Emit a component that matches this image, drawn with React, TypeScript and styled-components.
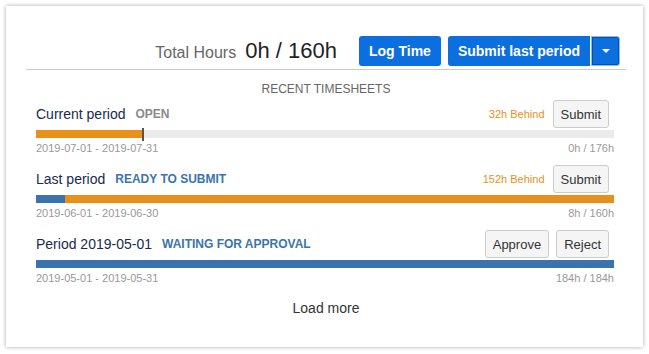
import React from 'react';
import styled, {createGlobalStyle} from 'styled-components';

type Period = {
    title: string;
    status: string;
    tone: 'grey' | 'blue';
    behind?: string;
    actions: string[];
    logged: number;
    expected: number;
    marker?: number;
    range: string;
    total: string;
};

const periods: Period[] = [
    {
        title: 'Current period', status: 'OPEN', tone: 'grey', behind: '32h Behind', actions: ['Submit'],
        logged: 0, expected: 18.3, marker: 18.3, range: '2019-07-01 - 2019-07-31', total: '0h / 176h'
    },
    {
        title: 'Last period', status: 'READY TO SUBMIT', tone: 'blue', behind: '152h Behind', actions: ['Submit'],
        logged: 5, expected: 100, range: '2019-06-01 - 2019-06-30', total: '8h / 160h'
    },
    {
        title: 'Period 2019-05-01', status: 'WAITING FOR APPROVAL', tone: 'blue', actions: ['Approve', 'Reject'],
        logged: 100, expected: 100, range: '2019-05-01 - 2019-05-31', total: '184h / 184h'
    },
];

const App: React.FC = () => {
    return (
        <>
            <GlobalStyle/>
            <Card>
                <Header>
                    <TotalLabel>Total Hours</TotalLabel>
                    <TotalValue>0h / 160h</TotalValue>
                    <PrimaryButton>Log Time</PrimaryButton>
                    <SplitGroup>
                        <PrimaryButton $split>Submit last period</PrimaryButton>
                        <DropdownButton aria-label="more">
                            <Caret/>
                        </DropdownButton>
                    </SplitGroup>
                </Header>
                <SectionTitle>Recent timesheets</SectionTitle>
                <List>
                    {periods.map(p => (
                        <Row key={p.title}>
                            <RowTop>
                                <Title>{p.title}</Title>
                                <Status $tone={p.tone}>{p.status}</Status>
                                <Spacer/>
                                {p.behind && <Behind>{p.behind}</Behind>}
                                <Actions>
                                    {p.actions.map(a => <LightButton key={a}>{a}</LightButton>)}
                                </Actions>
                            </RowTop>
                            <Bar>
                                <ExpectedFill style={{width: `${p.expected}%`}}/>
                                <LoggedFill style={{width: `${p.logged}%`}}/>
                                {p.marker !== undefined && <Marker style={{left: `${p.marker}%`}}/>}
                            </Bar>
                            <Meta>
                                <span>{p.range}</span>
                                <span>{p.total}</span>
                            </Meta>
                        </Row>
                    ))}
                </List>
                <LoadMore>Load more</LoadMore>
            </Card>
        </>
    )
};

export default App

const GlobalStyle = createGlobalStyle`
  body {
    margin: 0;
    padding: 6px;
    background: #fff;
    font-family: "Liberation Sans", Arial, sans-serif;
  }
`;

const Card = styled.div`
  width: 637px;
  height: 341px;
  box-sizing: border-box;
  background: #fff;
  box-shadow: 0 0 4px rgba(0, 0, 0, .35);
  padding: 30px 17px 0 20px;
`;

const Header = styled.div`
  display: flex;
  justify-content: flex-end;
  align-items: center;
  padding: 0 6px 3px 0;
  border-bottom: 1px solid #ccc;
`;

const TotalLabel = styled.span`
  font-size: 16px;
  color: #666;
  margin-right: 9px;
  padding-top: 3px;
`;

const TotalValue = styled.span`
  font-size: 22px;
  color: #222;
  margin-right: 22px;
`;

const PrimaryButton = styled.button<{ $split?: boolean }>`
  height: 30px;
  border: none;
  border-radius: ${p => p.$split ? '3px 0 0 3px' : '3px'};
  background: #0b6fe0;
  color: #fff;
  font-family: inherit;
  font-size: 14px;
  font-weight: bold;
  padding: 0 10px;
  margin-right: ${p => p.$split ? '0' : '7px'};
`;

const SplitGroup = styled.div`
  display: flex;
`;

const DropdownButton = styled.button`
  width: 29px;
  height: 30px;
  margin-left: 1px;
  border: 1px solid #8bb8ef;
  border-radius: 0 3px 3px 0;
  background: #0b6fe0;
  box-shadow: inset 0 0 0 1px #0b4fa8;
  display: flex;
  align-items: center;
  justify-content: center;
  padding: 0;
`;

const Caret = styled.span`
  width: 0;
  height: 0;
  border-left: 4px solid transparent;
  border-right: 4px solid transparent;
  border-top: 4px solid #fff;
`;

const SectionTitle = styled.div`
  text-align: center;
  text-transform: uppercase;
  font-size: 12px;
  color: #666;
  margin-top: 12px;
`;

const List = styled.div`
  display: flex;
  flex-direction: column;
  gap: 11px;
  padding: 0 12px 0 10px;
  margin-top: 4px;
`;

const Row = styled.div`
  display: flex;
  flex-direction: column;
`;

const RowTop = styled.div`
  display: flex;
  align-items: center;
  height: 28px;
  padding-right: 5px;
`;

const Title = styled.span`
  font-size: 14px;
  color: #172b4d;
  margin-right: 10px;
`;

const Status = styled.span<{ $tone: 'grey' | 'blue' }>`
  font-size: 12px;
  font-weight: bold;
  color: ${p => p.$tone === 'blue' ? '#3b73af' : '#8a8a8a'};
`;

const Spacer = styled.span`
  flex: 1;
`;

const Behind = styled.span`
  font-size: 11px;
  color: #e8901a;
  margin-right: 8px;
`;

const Actions = styled.div`
  display: flex;
  gap: 7px;
`;

const LightButton = styled.button`
  height: 28px;
  padding: 0 7px;
  border: 1px solid #ccc;
  border-radius: 3px;
  background: #f5f5f5;
  color: #333;
  font-family: inherit;
  font-size: 13px;
`;

const Bar = styled.div`
  position: relative;
  height: 8px;
  margin-top: 2px;
  background: #ebebeb;
`;

const ExpectedFill = styled.div`
  position: absolute;
  left: 0;
  top: 0;
  bottom: 0;
  background: #e8901a;
`;

const LoggedFill = styled.div`
  position: absolute;
  left: 0;
  top: 0;
  bottom: 0;
  background: #3b73af;
`;

const Marker = styled.div`
  position: absolute;
  top: -2px;
  bottom: -3px;
  width: 2px;
  background: #555;
`;

const Meta = styled.div`
  display: flex;
  justify-content: space-between;
  font-size: 11px;
  color: #999;
  margin-top: 4px;
`;

const LoadMore = styled.div`
  text-align: center;
  font-size: 14px;
  color: #333;
  margin-top: 16px;
`;
